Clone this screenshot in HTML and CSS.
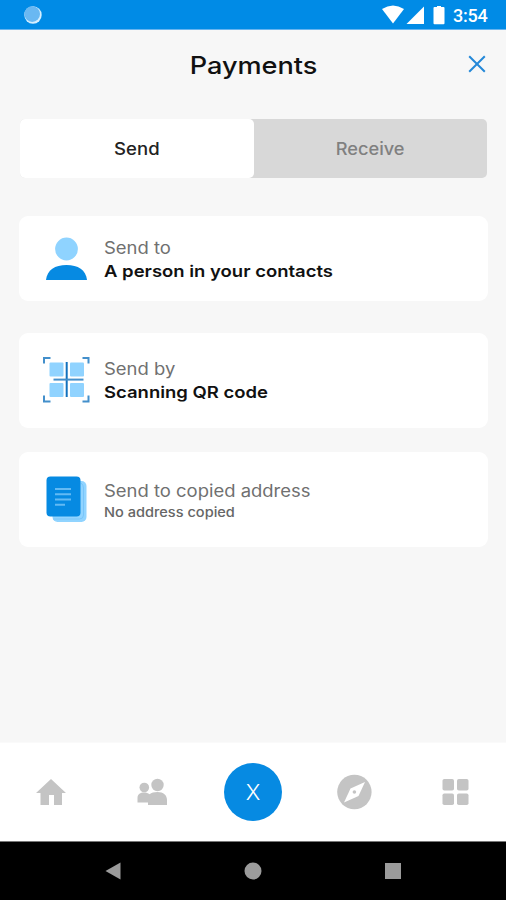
FILE: index.html
```html
<!DOCTYPE html>
<html lang="en">
<head>
<meta charset="utf-8">
<title>Payments</title>
<link rel="stylesheet" href="styles.css">
</head>
<body>
<div class="screen">
  <div class="status">
    <svg class="sync" width="20" height="20" viewBox="0 0 20 20"><circle cx="10" cy="10" r="8.7" fill="#d5efff"/><circle cx="9.2" cy="9.1" r="7.8" fill="#69b8f2"/></svg>
    <svg width="64" height="20" viewBox="0 0 64 20" fill="#fff"><path d="M0 4Q11-3.2 22 4L11 18.5Z"/><path d="M42 1.5V19H24.5Z"/><path d="M55 1h4v1h2.500q1 0 1 1v15.300q0 1-1 1h-9q-1 0-1-1V3q0-1 1-1H55Z"/></svg>
    <span class="time">3:54</span>
  </div>
  <header class="header">
    <h1 class="title">Payments</h1>
    <svg class="close" width="18" height="18" viewBox="0 0 18 18"><path d="M1.200 1.200 16.800 16.800M16.800 1.200 1.200 16.800" stroke="#2488d8" stroke-width="2" fill="none"/></svg>
  </header>
  <div class="tabs">
    <div class="tab tab-active"><span class="t-send">Send</span></div>
    <div class="tab"><span class="t-receive">Receive</span></div>
  </div>
  <main class="cards">
    <section class="card card-person">
      <svg class="icon" width="48" height="48" viewBox="0 0 48 48"><circle cx="23.500" cy="14" r="11.400" fill="#8fd3ff"/><path d="M3 45C4 35 12 30 23.500 30S43 35 44 45Z" fill="#068ae2"/></svg>
      <div class="text"><div class="label">Send to</div><div class="strong">A person in your contacts</div></div>
    </section>
    <section class="card card-qr">
      <svg class="icon" width="48" height="48" viewBox="0 0 48 48"><g fill="#90d3ff"><rect x="6.500" y="6.500" width="14" height="14" rx="1"/><rect x="27" y="6.500" width="14" height="14" rx="1"/><rect x="6.500" y="27" width="14" height="14" rx="1"/><rect x="27" y="27" width="14" height="14" rx="1"/></g><path d="M23.700 6v35" stroke="#1271bd" stroke-width="2"/><path d="M10.500 23.600h30" stroke="#438fcb" stroke-width="2"/><path d="M1 7.500V2h6.500M39.500 2H45.500v5.500M1 39.500v6h6.500M39.500 45.500h6v-6" fill="none" stroke="#438fcb" stroke-width="2"/></svg>
      <div class="text"><div class="label">Send by</div><div class="strong">Scanning QR code</div></div>
    </section>
    <section class="card card-copy">
      <svg class="icon" width="48" height="48" viewBox="0 0 48 48"><rect x="9.500" y="6" width="34" height="41" rx="5" fill="#91d4ff"/><path d="M38 8q2.500 2 2.500 5v27q0 4-4 4H10" fill="none" stroke="#79c5fa" stroke-width="1"/><rect x="3.500" y="1.500" width="34" height="40" rx="4" fill="#068ae2"/><path d="M12 14h16M12 19.300h16M12 24.600h16M12 29.700h10" stroke="#63baf4" stroke-width="2"/></svg>
      <div class="text"><div class="label">Send to copied address</div><div class="note">No address copied</div></div>
    </section>
  </main>
  <nav class="nav">
    <div class="item"><svg width="30" height="28" viewBox="0 0 30 28"><path d="M15 1 30 15h-4v12h-8V17h-5v10H4.500V15H0Z" fill="#c4c4c4"/></svg></div>
    <div class="item"><svg width="32" height="28" viewBox="0 0 32 28" fill="#c4c4c4"><circle cx="8.300" cy="9.500" r="4.800"/><circle cx="21.500" cy="7" r="6.200"/><path d="M1.500 24.500V20c0-4 3-5.500 6.500-5.500 2.500 0 4 .5 5.500 1.800 2-1.500 4.500-2.300 8-2.300 6 0 9.500 3.200 9.500 8v5H12v-2.500Z"/></svg></div>
    <div class="item"><div class="fab"><span>X</span></div></div>
    <div class="item"><svg width="36" height="36" viewBox="0 0 36 36"><circle cx="18.400" cy="18" r="17.200" fill="#c4c4c4"/><path d="M29 8 22.500 22 8 28.500 14.500 14.500Z" fill="#fff"/><circle cx="18.400" cy="18" r="1.800" fill="#c4c4c4"/></svg></div>
    <div class="item"><svg width="28" height="28" viewBox="0 0 28 28" fill="#c4c4c4"><rect x="1.500" y="1" width="11.500" height="11.500" rx="1.800"/><rect x="16" y="1" width="11.500" height="11.500" rx="1.800"/><rect x="1.500" y="15.500" width="11.500" height="11.500" rx="1.800"/><rect x="16" y="15.500" width="11.500" height="11.500" rx="1.800"/></svg></div>
  </nav>
  <div class="system">
    <svg width="18" height="18" viewBox="0 0 18 18"><path d="M1.500 9 16.500.5v17Z" fill="#9b9b9b"/></svg>
    <svg width="18" height="18" viewBox="0 0 18 18"><circle cx="9" cy="9" r="8.500" fill="#9b9b9b"/></svg>
    <svg width="18" height="18" viewBox="0 0 18 18"><rect x="1" y="1" width="16" height="16" fill="#9b9b9b"/></svg>
  </div>
</div>
</body>
</html>
```
FILE: styles.css
```css
* { box-sizing: border-box; }
body { margin: 0; font-family: Inter, "Open Sans", sans-serif; }
svg { display: block; flex: none; }
.screen { width: 506px; height: 900px; display: flex; flex-direction: column; background: #f7f7f7; }
.status { height: 30px; flex: none; background: #008be6; border-bottom: 1px solid #68b4ef; display: flex; align-items: center; padding: 1px 18px 0 23px; }
.sync { margin-right: auto; }
.time { width: 35px; margin-left: 7px; margin-top: 2px; font: 500 18px/20px Roboto, sans-serif; color: #fff; letter-spacing: -0.2px; white-space: nowrap; }
.header { height: 89px; flex: none; display: grid; grid-template-columns: 1fr auto 1fr; align-items: start; padding: 20px 20px 0; }
.title { grid-column: 2; margin: 0; font-size: 24px; line-height: 32px; font-weight: 550; color: #111; white-space: nowrap; transform: translateX(1px) scaleX(1.13); }
.close { justify-self: end; margin-top: 5px; }
.tabs { height: 59px; flex: none; margin: 0 19px 0 20px; display: flex; background: #d8d8d8; border-radius: 5px; }
.tab { flex: 1; display: flex; align-items: center; justify-content: center; border-radius: 5px; font-size: 17px; font-weight: 450; color: #808080; }
.tab-active { background: #fff; color: #222; }
.t-send { transform: scaleX(1.09); }
.t-receive { transform: scaleX(1.07); }
.cards { flex: 1; padding: 38px 18px 0 19px; }
.card { display: flex; background: #fff; border-radius: 9px; padding-left: 24px; }
.icon { margin-right: 13px; }
.text { white-space: nowrap; padding-top: 1px; }
.card-person { height: 85px; padding-top: 19px; margin-bottom: 32px; }
.card-qr { height: 95px; padding-top: 23px; margin-bottom: 24px; }
.card-copy { height: 95px; padding-top: 23px; }
.card-copy .text { padding-top: 4px; }
.label, .strong, .note { width: max-content; transform-origin: left; }
.label { font-size: 17px; line-height: 24px; color: #707070; transform: scaleX(1.085); }
.strong { font-size: 16.5px; line-height: 23px; font-weight: 600; color: #111; transform: scaleX(1.12); }
.note { font-size: 13px; line-height: 18px; font-weight: 500; color: #666; transform: scaleX(1.12); }
.nav { height: 99px; flex: none; background: #fff; border-top: 1px solid #fafafa; display: grid; grid-template-columns: repeat(5, 1fr); }
.item { display: flex; align-items: center; justify-content: center; }
.fab { width: 58px; height: 58px; border-radius: 50%; background: #068ae2; color: #fff; display: flex; align-items: center; justify-content: center; font-size: 22px; font-weight: 300; }
.system { height: 59px; flex: none; background: #000; border-top: 1px solid #777; display: flex; align-items: center; justify-content: center; gap: 122px; }
```
